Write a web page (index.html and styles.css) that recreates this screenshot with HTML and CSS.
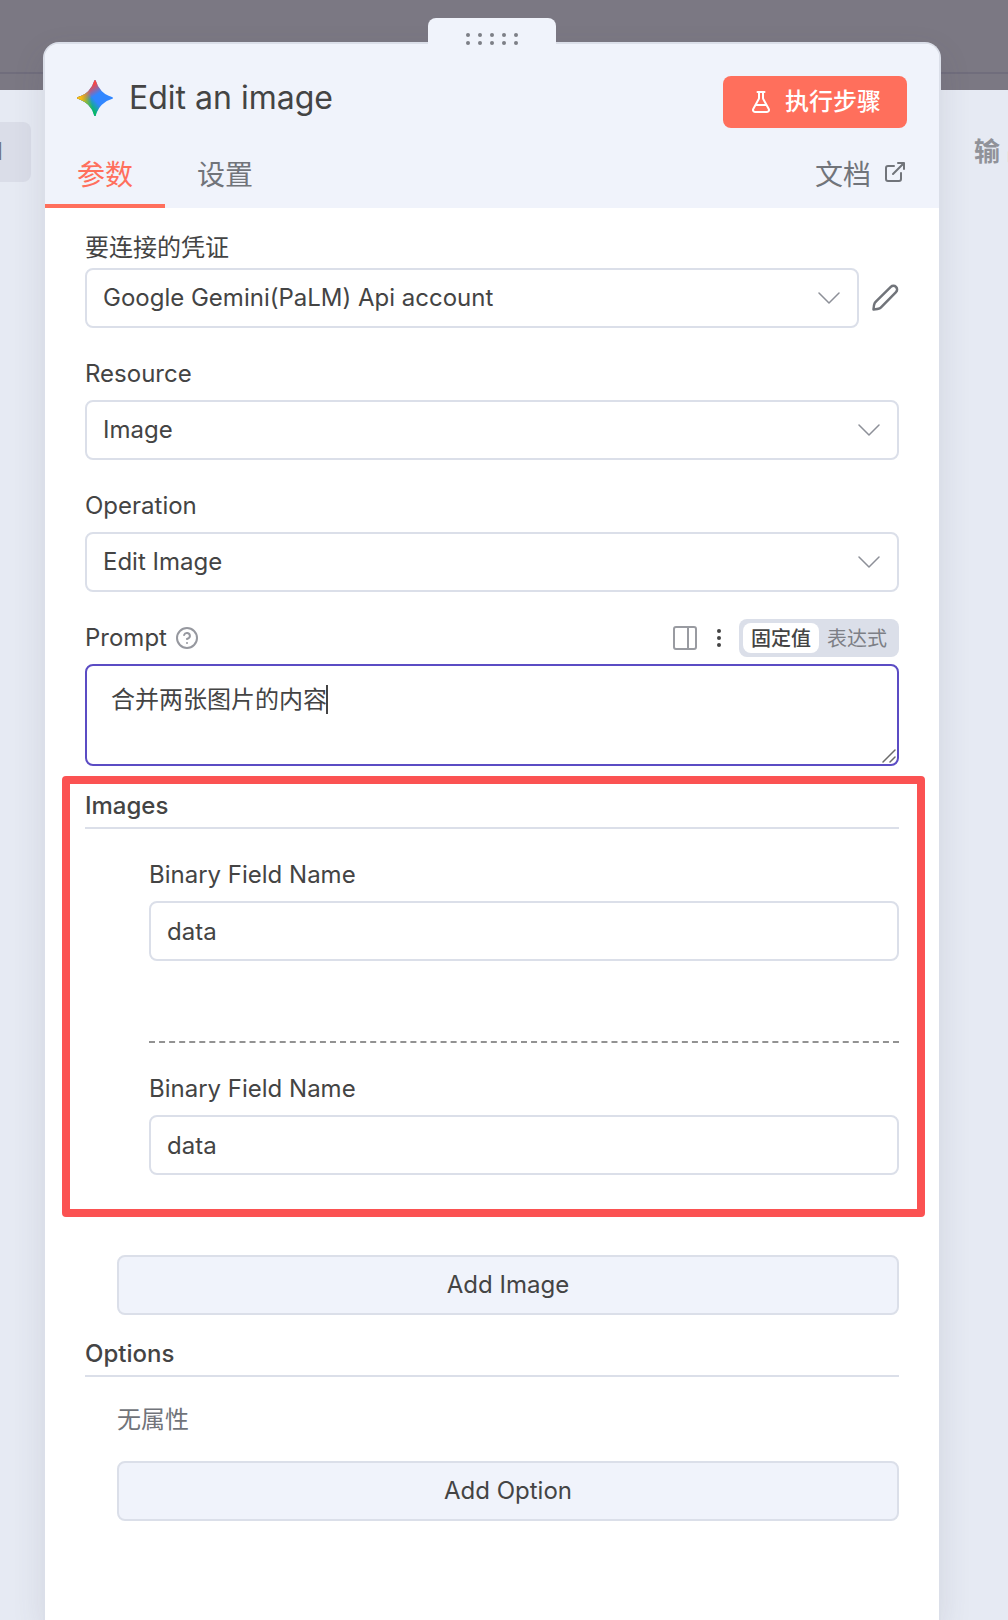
FILE: index.html
```html
<!DOCTYPE html>
<html lang="zh-CN">
<head>
<meta charset="utf-8">
<meta name="viewport" content="width=device-width, initial-scale=1">
<title>Edit an image</title>
<link rel="stylesheet" href="styles.css">
</head>
<body>
<div class="workspace">
  <aside class="side side-input"><span class="side-chip">JSON</span></aside>

  <main class="panel">
    <div class="drag-handle">
      <i class="dot"></i><i class="dot"></i><i class="dot"></i><i class="dot"></i><i class="dot"></i>
      <i class="dot"></i><i class="dot"></i><i class="dot"></i><i class="dot"></i><i class="dot"></i>
    </div>

    <header class="panel-header">
      <div class="title-row">
        <div class="title-group">
          <svg class="logo" viewBox="1 1 22 22" aria-hidden="true">
            <defs>
              <linearGradient id="g-green" x1="7" y1="15.5" x2="11" y2="12" gradientUnits="userSpaceOnUse"><stop stop-color="#08b962"/><stop offset="1" stop-color="#08b962" stop-opacity="0"/></linearGradient>
              <linearGradient id="g-red" x1="8" y1="5.5" x2="11.5" y2="11" gradientUnits="userSpaceOnUse"><stop stop-color="#f94543"/><stop offset="1" stop-color="#f94543" stop-opacity="0"/></linearGradient>
              <linearGradient id="g-yellow" x1="3.5" y1="13.5" x2="17.5" y2="12" gradientUnits="userSpaceOnUse"><stop stop-color="#fabc12"/><stop offset=".46" stop-color="#fabc12" stop-opacity="0"/></linearGradient>
              <path id="spark" d="M20.616 10.835a14.147 14.147 0 0 1-4.450-3.001 14.111 14.111 0 0 1-3.678-6.452.503.503 0 0 0-.975 0 14.134 14.134 0 0 1-3.679 6.452 14.155 14.155 0 0 1-4.450 3.001c-.65.28-1.318.505-2.002.678a.502.502 0 0 0 0 .975c.684.172 1.350.397 2.002.677a14.147 14.147 0 0 1 4.450 3.001 14.112 14.112 0 0 1 3.679 6.453.502.502 0 0 0 .975 0c.172-.685.397-1.351.677-2.003a14.145 14.145 0 0 1 3.001-4.450 14.113 14.113 0 0 1 6.453-3.678.503.503 0 0 0 0-.975 13.245 13.245 0 0 1-2.003-.678z"/>
            </defs>
            <use href="#spark" fill="#3186ff"/>
            <use href="#spark" fill="url(#g-green)"/>
            <use href="#spark" fill="url(#g-red)"/>
            <use href="#spark" fill="url(#g-yellow)"/>
          </svg>
          <h1 class="title">Edit an image</h1>
        </div>
        <button class="run-button" type="button">
          <svg class="icon" viewBox="0 0 24 24" aria-hidden="true"><path d="M14 2v6a2 2 0 0 0 .245.96l5.510 10.080A2 2 0 0 1 18 22H6a2 2 0 0 1-1.755-2.960l5.510-10.080A2 2 0 0 0 10 8V2M6.453 15h11.094M8.500 2h7"/></svg>
          <span>执行步骤</span>
        </button>
      </div>
      <nav class="tabs">
        <a class="tab tab-active" href="#params">参数</a>
        <a class="tab" href="#settings">设置</a>
        <a class="docs-link" href="#docs">文档
          <svg class="icon" viewBox="0 0 24 24" aria-hidden="true"><path d="M15 3h6v6M10 14 21 3M18 13v6a2 2 0 0 1-2 2H5a2 2 0 0 1-2-2V8a2 2 0 0 1 2-2h6"/></svg>
        </a>
      </nav>
    </header>

    <form class="panel-body" id="params">
      <div class="field field-credential">
        <label class="label" for="credential">要连接的凭证</label>
        <div class="control-row">
          <div class="select-wrap">
            <select class="control" id="credential"><option>Google Gemini(PaLM) Api account</option></select>
            <svg class="chevron" viewBox="0 0 22 12" aria-hidden="true"><path d="M1 1l10 10L21 1"/></svg>
          </div>
          <button class="icon-button" type="button" aria-label="编辑凭证">
            <svg class="pencil" viewBox="0 0 28 28" aria-hidden="true"><path d="M2.500 25.500c.2-3 .3-4.600 1.100-6.200.4-.8 1-1.400 2-2.400L19.800 2.900a3.650 3.650 0 0 1 5.200 5.200L11 22.400c-1 1-1.600 1.600-2.400 2-1.500.8-3.100.9-6.100 1.100z"/></svg>
          </button>
        </div>
      </div>

      <div class="field">
        <label class="label" for="resource">Resource</label>
        <div class="select-wrap">
          <select class="control" id="resource"><option>Image</option></select>
          <svg class="chevron" viewBox="0 0 22 12" aria-hidden="true"><path d="M1 1l10 10L21 1"/></svg>
        </div>
      </div>

      <div class="field">
        <label class="label" for="operation">Operation</label>
        <div class="select-wrap">
          <select class="control" id="operation"><option>Edit Image</option></select>
          <svg class="chevron" viewBox="0 0 22 12" aria-hidden="true"><path d="M1 1l10 10L21 1"/></svg>
        </div>
      </div>

      <div class="field field-prompt">
        <div class="label-row">
          <label class="label" for="prompt">Prompt</label>
          <svg class="help" viewBox="0 0 24 24" aria-hidden="true"><circle cx="12" cy="12" r="10"/><path d="M9.100 9a3 3 0 0 1 5.820 1c0 2-3 3-3 3M12 17h.010"/></svg>
          <div class="field-tools">
            <button class="icon-button" type="button" aria-label="面板">
              <svg class="dock" viewBox="0 0 24 24" aria-hidden="true"><rect x="1" y="1" width="22" height="22" rx="2"/><path d="M15 1v22"/></svg>
            </button>
            <button class="icon-button" type="button" aria-label="更多">
              <svg class="kebab" viewBox="0 0 4 18" aria-hidden="true"><circle cx="2" cy="2" r="2"/><circle cx="2" cy="9" r="2"/><circle cx="2" cy="16" r="2"/></svg>
            </button>
            <div class="toggle">
              <input class="toggle-input" type="radio" name="mode" id="mode-fixed" checked>
              <label class="toggle-option" for="mode-fixed">固定值</label>
              <input class="toggle-input" type="radio" name="mode" id="mode-expr">
              <label class="toggle-option" for="mode-expr">表达式</label>
            </div>
          </div>
        </div>
        <div class="textarea-wrap">
          <textarea class="textarea" id="prompt">合并两张图片的内容</textarea>
          <span class="caret"></span>
          <svg class="grip" viewBox="0 0 14 14" aria-hidden="true"><path d="M1 13 13 1M8 13l5-5"/></svg>
        </div>
      </div>

      <section class="highlight">
        <h2 class="section-title">Images</h2>
        <div class="image-item">
          <label class="label" for="binary-1">Binary Field Name</label>
          <input class="control" id="binary-1" type="text" value="data">
        </div>
        <div class="image-item image-item-next">
          <label class="label" for="binary-2">Binary Field Name</label>
          <input class="control" id="binary-2" type="text" value="data">
        </div>
      </section>
      <button class="add-button" type="button">Add Image</button>

      <section class="options">
        <h2 class="section-title">Options</h2>
        <p class="empty">无属性</p>
        <button class="add-button" type="button">Add Option</button>
      </section>
    </form>
  </main>

  <aside class="side side-output"><div class="side-title"><span>输</span><span>出</span></div></aside>
</div>
</body>
</html>
```

FILE: styles.css
```css
* {
  box-sizing: border-box;
}

body {
  margin: 0;
  color: #444;
  font-family: Inter, "Noto Sans CJK SC", sans-serif;
  font-size: 24px;
  line-height: 32px;
}

button,
input,
select,
textarea {
  margin: 0;
  color: inherit;
  font: inherit;
}

h1,
h2,
p {
  margin: 0;
}

svg {
  display: block;
  flex: none;
  fill: none;
  stroke: currentColor;
  stroke-linecap: round;
  stroke-linejoin: round;
}

/* Dimmed canvas strip on top, side panes below it */
.workspace {
  display: grid;
  grid-template-columns: 43px minmax(0, 1fr) 67px;
  min-height: 100vh;
  background: linear-gradient(#7b7883 72px, #706d7c 72px 74px, #7b7883 74px 90px, #e6eaf3 90px);
}

.side {
  display: flex;
  overflow: hidden;
  align-items: flex-start;
  padding-top: 122px;
}

.side-input {
  justify-content: flex-end;
  padding-right: 12px;
}

.side-chip {
  padding: 14px 28px;
  border-radius: 8px;
  background: #dadde8;
  color: #71747a;
}

.side-output {
  padding-left: 33px;
}

.side-title {
  display: flex;
  flex: none;
  gap: 6px;
  padding: 14px 0;
  color: #909299;
  font-size: 26px;
  font-weight: 700;
}

.panel {
  position: relative;
  margin-top: 42px;
  border: 2px solid #dbdfe9;
  border-bottom: 0;
  border-radius: 16px 16px 0 0;
  background: #fff;
  box-shadow: 0 12px 32px rgba(68, 68, 90, 0.12);
}

.drag-handle {
  position: absolute;
  top: -26px;
  left: 50%;
  display: grid;
  grid-template-columns: repeat(5, 4px);
  gap: 4px 8px;
  align-content: start;
  justify-content: center;
  width: 128px;
  height: 30px;
  margin-left: -64px;
  padding-top: 15px;
  border-radius: 8px 8px 0 0;
  background: #f0f3fb;
}

.dot {
  width: 4px;
  height: 4px;
  border-radius: 50%;
  background: #7d7f86;
}

.panel-header {
  padding-top: 32px;
  border-radius: 14px 14px 0 0;
  background: #f0f3fb;
}

.title-row {
  display: flex;
  align-items: flex-start;
  justify-content: space-between;
  padding: 0 32px;
}

.title-group {
  display: flex;
  gap: 16px;
  align-items: center;
  height: 44px;
}

.logo {
  width: 36px;
  height: 36px;
  stroke: none;
}

.title {
  font-size: 32px;
  font-weight: 400;
  line-height: 40px;
}

.run-button {
  display: flex;
  gap: 12px;
  align-items: center;
  height: 52px;
  padding: 0 26px;
  border: 0;
  border-radius: 8px;
  background: #ff6f5c;
  color: #fff;
  font-weight: 500;
}

.icon {
  width: 24px;
  height: 24px;
  stroke-width: 2;
}

.tabs {
  display: flex;
  padding-right: 32px;
  font-size: 28px;
  line-height: 40px;
}

.tab {
  width: 120px;
  padding: 27px 0 9px;
  border-bottom: 4px solid transparent;
  color: #71747a;
  text-align: center;
  text-decoration: none;
}

.tab-active {
  border-color: #ff6f5c;
  color: #ff6f5c;
}

.docs-link {
  display: flex;
  gap: 12px;
  align-items: flex-start;
  margin-left: auto;
  padding-top: 27px;
  color: #71747a;
  text-decoration: none;
}

.docs-link .icon {
  margin-top: 5px;
}

.panel-body {
  display: flex;
  flex-direction: column;
  padding: 24px 40px 96px;
}

.field {
  display: flex;
  flex-direction: column;
  gap: 10px;
  margin-bottom: 30px;
}

.field-credential {
  gap: 4px;
}

.control-row {
  display: flex;
  gap: 12px;
  align-items: center;
}

.select-wrap,
.textarea-wrap {
  position: relative;
  flex: 1;
}

.control {
  display: block;
  width: 100%;
  height: 60px;
  padding: 0 16px;
  border: 2px solid #dbdfe9;
  border-radius: 8px;
  outline: 0;
  background: #fff;
  appearance: none;
}

.chevron {
  position: absolute;
  top: 24px;
  right: 19px;
  width: 22px;
  height: 12px;
  color: #8d9098;
  stroke-width: 1.5;
  pointer-events: none;
}

.icon-button {
  padding: 0;
  border: 0;
  background: none;
  color: #71747a;
}

.pencil {
  width: 28px;
  height: 28px;
  stroke-width: 2.5;
}

.field-prompt {
  gap: 7px;
  margin-bottom: 10px;
}

.label-row {
  display: flex;
  align-items: center;
  height: 38px;
  margin-top: -3px;
}

.help {
  width: 24px;
  height: 24px;
  margin-left: 8px;
  color: #96989f;
  stroke-width: 2;
}

.field-tools {
  display: flex;
  align-items: center;
  margin-left: auto;
}

.dock {
  width: 24px;
  height: 24px;
  margin-right: 20px;
  color: #999ba1;
  stroke-width: 2;
}

.kebab {
  width: 4px;
  height: 18px;
  margin-right: 18px;
  fill: #444;
  stroke: none;
}

.toggle {
  display: flex;
  padding: 4px;
  border-radius: 8px;
  background: #dbdfe9;
}

.toggle-input {
  position: absolute;
  opacity: 0;
  pointer-events: none;
}

.toggle-option {
  width: 76px;
  height: 30px;
  border-radius: 8px;
  color: #7d7f86;
  font-size: 20px;
  line-height: 32px;
  text-align: center;
}

.toggle-input:checked + .toggle-option {
  background: #fff;
  color: #444;
  font-weight: 500;
}

.textarea {
  display: block;
  width: 100%;
  height: 102px;
  padding: 18px 24px;
  border: 2px solid #5b4cc4;
  border-radius: 8px;
  outline: 0;
  background: #fff;
  resize: none;
}

.caret {
  position: absolute;
  top: 21px;
  left: 241px;
  width: 2px;
  height: 29px;
  background: #444;
}

.grip {
  position: absolute;
  right: 3px;
  bottom: 3px;
  width: 14px;
  height: 14px;
  stroke: #6b6b6b;
  stroke-width: 1.5;
}

.highlight {
  margin: 0 -26px 0 -23px;
  padding: 6px 18px 34px 15px;
  border: 8px solid #fb5252;
  border-radius: 4px;
}

.section-title {
  padding-bottom: 5px;
  border-bottom: 2px solid #dbdfe9;
  font-size: 24px;
  font-weight: 500;
}

.image-item {
  display: flex;
  flex-direction: column;
  gap: 10px;
  margin-left: 64px;
  padding: 30px 0 80px;
}

.image-item-next {
  padding-bottom: 0;
  border-top: 2px dashed #929292;
}

.add-button {
  height: 60px;
  margin-left: 32px;
  border: 2px solid #dbdfe9;
  border-radius: 8px;
  background: #f0f3fb;
}

.highlight + .add-button {
  margin-top: 38px;
}

.options {
  display: flex;
  flex-direction: column;
  margin-top: 23px;
}

.empty {
  margin-left: 32px;
  padding: 27px 0 25px;
  color: #71747a;
}
```
